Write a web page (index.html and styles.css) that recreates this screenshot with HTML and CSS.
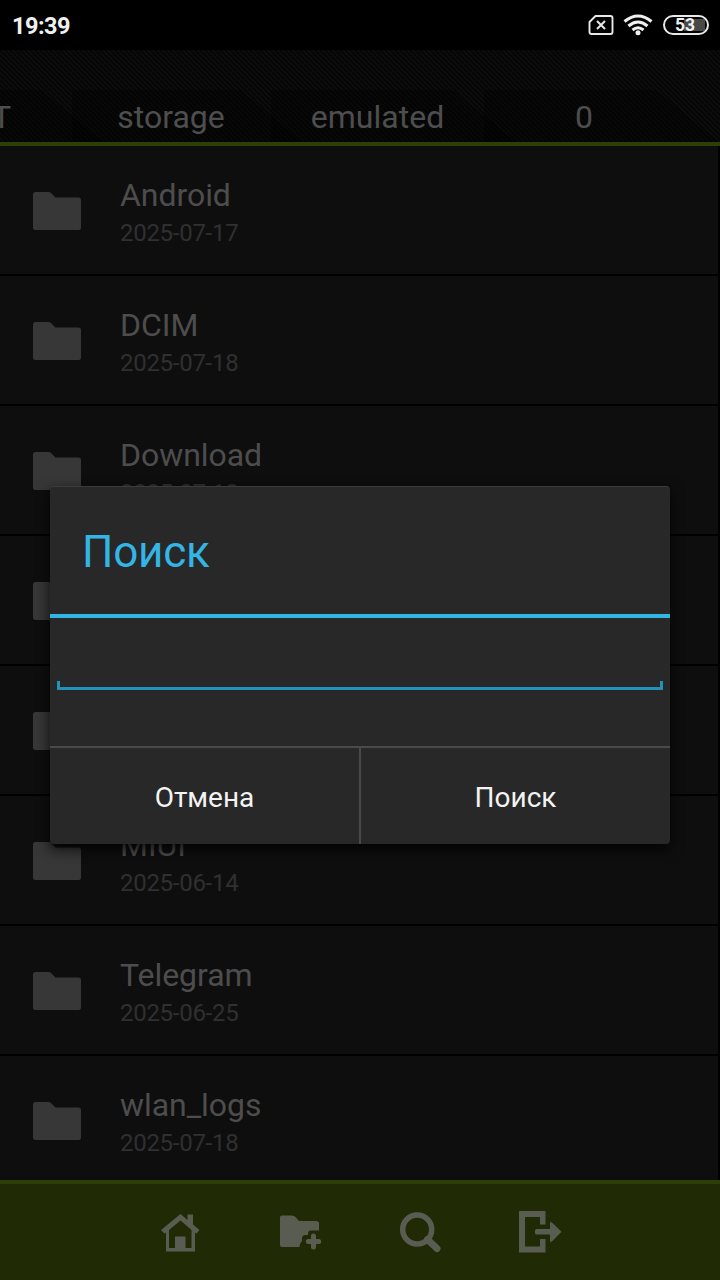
FILE: index.html
```html
<!DOCTYPE html>
<html lang="ru">
<head>
<meta charset="utf-8">
<title>Поиск</title>
<link rel="stylesheet" href="styles.css">
</head>
<body>
<div class="screen">
  <header class="status">
    <span class="clock">19:39</span>
    <svg class="sim" width="26" height="20" viewBox="0 0 26 20"><path d="M7.500 1H22.500Q24.500 1 24.500 3V17Q24.500 19 22.500 19H3.500Q1.500 19 1.500 17V7Z" fill="none" stroke="#e8e8e8" stroke-width="1.900" stroke-linejoin="round"/><path d="M9 6L17 14M17 6L9 14" stroke="#e8e8e8" stroke-width="2"/></svg>
    <svg class="wifi" width="30" height="22" viewBox="0 0 30 22"><g fill="none" stroke="#f0f0f0" stroke-width="3"><path d="M1.500 7.500Q15 -3.500 28.500 7.500"/><path d="M5.500 12Q15 4 24.500 12"/><path d="M9.500 16Q15 11.500 20.500 16"/></g><circle cx="15" cy="18.700" r="2.500" fill="#f0f0f0"/></svg>
    <span class="battery">53</span>
  </header>
  <nav class="path">
    <span class="tab tab-root">T</span>
    <span class="tab tab-storage">storage</span>
    <span class="tab tab-emulated">emulated</span>
    <span class="tab tab-zero">0</span>
  </nav>
  <main class="list">
    <div class="row"><svg class="folder" width="48" height="38" viewBox="0 0 48 38"><path d="M2.500 0H15.500Q17 0 18 1L22.500 5.500H45.500Q48 5.500 48 8V35.500Q48 38 45.500 38H2.500Q0 38 0 35.500V2.500Q0 0 2.500 0Z"/></svg><div class="info"><div class="name">Android</div><div class="date">2025-07-17</div></div></div>
    <div class="row"><svg class="folder" width="48" height="38" viewBox="0 0 48 38"><path d="M2.500 0H15.500Q17 0 18 1L22.500 5.500H45.500Q48 5.500 48 8V35.500Q48 38 45.500 38H2.500Q0 38 0 35.500V2.500Q0 0 2.500 0Z"/></svg><div class="info"><div class="name">DCIM</div><div class="date">2025-07-18</div></div></div>
    <div class="row"><svg class="folder" width="48" height="38" viewBox="0 0 48 38"><path d="M2.500 0H15.500Q17 0 18 1L22.500 5.500H45.500Q48 5.500 48 8V35.500Q48 38 45.500 38H2.500Q0 38 0 35.500V2.500Q0 0 2.500 0Z"/></svg><div class="info"><div class="name">Download</div><div class="date">2025-07-18</div></div></div>
    <div class="row"><svg class="folder" width="48" height="38" viewBox="0 0 48 38"><path d="M2.500 0H15.500Q17 0 18 1L22.500 5.500H45.500Q48 5.500 48 8V35.500Q48 38 45.500 38H2.500Q0 38 0 35.500V2.500Q0 0 2.500 0Z"/></svg></div>
    <div class="row"><svg class="folder" width="48" height="38" viewBox="0 0 48 38"><path d="M2.500 0H15.500Q17 0 18 1L22.500 5.500H45.500Q48 5.500 48 8V35.500Q48 38 45.500 38H2.500Q0 38 0 35.500V2.500Q0 0 2.500 0Z"/></svg></div>
    <div class="row"><svg class="folder" width="48" height="38" viewBox="0 0 48 38"><path d="M2.500 0H15.500Q17 0 18 1L22.500 5.500H45.500Q48 5.500 48 8V35.500Q48 38 45.500 38H2.500Q0 38 0 35.500V2.500Q0 0 2.500 0Z"/></svg><div class="info"><div class="name">MIUI</div><div class="date">2025-06-14</div></div></div>
    <div class="row"><svg class="folder" width="48" height="38" viewBox="0 0 48 38"><path d="M2.500 0H15.500Q17 0 18 1L22.500 5.500H45.500Q48 5.500 48 8V35.500Q48 38 45.500 38H2.500Q0 38 0 35.500V2.500Q0 0 2.500 0Z"/></svg><div class="info"><div class="name">Telegram</div><div class="date">2025-06-25</div></div></div>
    <div class="row"><svg class="folder" width="48" height="38" viewBox="0 0 48 38"><path d="M2.500 0H15.500Q17 0 18 1L22.500 5.500H45.500Q48 5.500 48 8V35.500Q48 38 45.500 38H2.500Q0 38 0 35.500V2.500Q0 0 2.500 0Z"/></svg><div class="info"><div class="name">wlan_logs</div><div class="date">2025-07-18</div></div></div>
  </main>
  <footer class="toolbar">
    <svg class="tool" width="48" height="48" viewBox="0 0 48 48"><path fill-rule="evenodd" d="M24.500 4L31.500 10V4.500H37V14.500L43.500 20L40.500 23.500L39 22.500V41.500H10V22.500L8.500 23.500L5 20ZM24.500 10.500L13 20V38H35.500V20Z"/><path d="M19 26.500H29.500V39H19Z"/></svg>
    <svg class="tool" width="48" height="48" viewBox="0 0 48 48"><path d="M6 5.500H15.500Q18 5.500 19.500 7L23 11H40.500Q43 11 43 13.500V20.500H35Q32 20.500 32 23.500V25H29.500Q26 25 26 28.500V31.500Q24 32 23.500 37H6Q4 37 4 35V7.500Q4 5.500 6 5.500Z"/><path d="M37.500 26V37M32.300 31.500H42.700" fill="none" stroke="#595c50" stroke-width="5" stroke-linecap="round"/></svg>
    <svg class="tool" width="48" height="48" viewBox="0 0 48 48"><circle cx="21.200" cy="19.500" r="14.500" fill="none" stroke="#595c50" stroke-width="5.500"/><path d="M31.500 29.500L41 38.500" stroke="#595c50" stroke-width="7" stroke-linecap="round"/></svg>
    <svg class="tool" width="48" height="48" viewBox="0 0 48 48"><path d="M3 1H29.500V14.500H24V7H9V36.500H24V29H29.500V42.500H3Z"/><path d="M20.500 19H34V12Q35.500 12 36.500 13L45.500 21.700L36.500 31Q35.500 32 34 32V24.500H20.500Q19 24.500 19 23V20.500Q19 19 20.500 19Z"/></svg>
  </footer>
  <section class="dialog">
    <h1 class="title">Поиск</h1>
    <div class="content"><div class="field"></div></div>
    <div class="buttons"><div class="button">Отмена</div><div class="button">Поиск</div></div>
  </section>
</div>
</body>
</html>
```

FILE: styles.css
```css
* { box-sizing: border-box; }
body { margin: 0; background: #000; font-family: Roboto, sans-serif; }
.screen { position: relative; width: 720px; height: 1280px; overflow: hidden; display: flex; flex-direction: column; }
.status { height: 50px; flex: none; display: flex; align-items: center; background: #000; padding: 0 11px 0 12px; color: #f0f0f0; }
.clock { flex: 1; font-size: 23.500px; line-height: 28px; font-weight: 700; padding-top: 2px; letter-spacing: -0.500px; }
.sim { margin-right: 9px; }
.wifi { margin-right: 10px; }
.battery { width: 46px; height: 20px; border: 2px solid #e8e8e8; border-radius: 10px; font-size: 17.500px; line-height: 16px; font-weight: 700; text-align: center; padding-right: 2px; background: linear-gradient(90deg, #000 46%, #484848 46%) center / 38px 12px no-repeat; }
.path { height: 96px; flex: none; display: flex; align-items: flex-end; border-bottom: 4px solid #2d3f08; background: repeating-linear-gradient(45deg, #060606 0 2.121px, #0d0d0d 2.121px 3.536px); }
.tab { height: 52px; flex: none; font-size: 32px; line-height: 54px; text-align: center; color: #4e4e4e; background: rgba(0, 0, 0, 0.3); clip-path: polygon(0 0, calc(100% - 62px) 0, 100% 100%, 0 100%); }
.tab-root { width: 103px; margin-right: -31px; padding-right: 92px; direction: rtl; }
.tab-storage { width: 230px; margin-right: -31px; padding-right: 32px; }
.tab-emulated { width: 244px; margin-right: -31px; padding-right: 31px; }
.tab-zero { width: 234px; padding-right: 34px; }
.list { height: 1034px; flex: none; overflow: hidden; border-right: 2px solid #000; background: #0e0e0e; }
.row { height: 130px; display: flex; align-items: flex-start; border-bottom: 2px solid #000; padding-left: 32.500px; gap: 39.500px; }
.folder { flex: none; margin-top: 45.500px; fill: #373737; }
.info { padding-top: 30px; }
.name { font-size: 32px; line-height: 38px; color: #4d4d4d; letter-spacing: -0.050px; }
.date { font-size: 24px; line-height: 28px; margin-top: 5px; color: #303030; letter-spacing: -0.280px; }
.toolbar { height: 100px; flex: none; display: flex; justify-content: center; gap: 72px; padding-top: 26px; border-top: 4px solid #2d3f08; background: #202a05; }
.tool { fill: #595c50; }
.dialog { position: absolute; left: 50px; top: 486px; width: 620px; height: 358px; border-radius: 4px; overflow: hidden; background: #282828; box-shadow: 0 5px 14px rgba(0, 0, 0, 0.8); border-top: 1px solid #3c3c3c; }
.title { height: 131px; margin: 0; padding-left: 32px; border-bottom: 4px solid #33b5e5; font-size: 44px; font-weight: 400; line-height: 131px; letter-spacing: -0.200px; color: #33b5e5; }
.content { height: 128px; padding: 63px 7px 0; }
.field { height: 9px; border: 3px solid #1f93ba; border-top: 0; }
.buttons { height: 98px; display: flex; border-top: 2px solid #4a4a4a; }
.button { flex: 1; text-align: center; font-size: 28px; line-height: 99px; color: #f3f3f3; }
.button + .button { border-left: 2px solid #4a4a4a; }
```
